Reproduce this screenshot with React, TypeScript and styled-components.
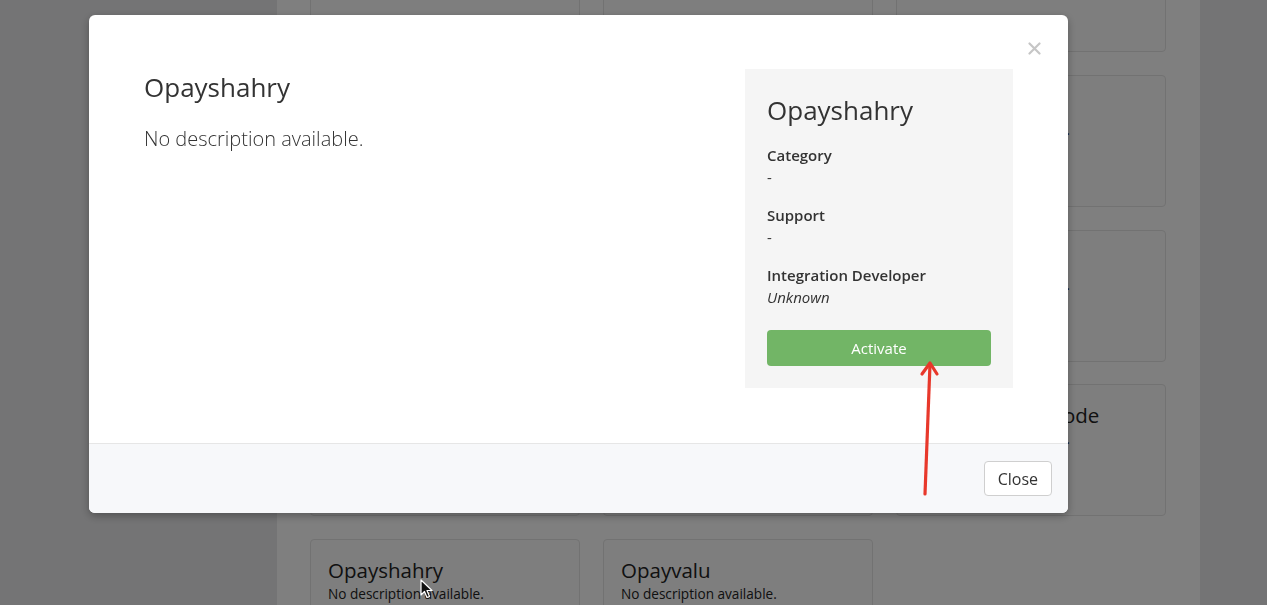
import styled, { createGlobalStyle } from "styled-components";

const GlobalStyle = createGlobalStyle`
  html, body {
    margin: 0;
    padding: 0;
    overflow: hidden;
    font-family: "Open Sans", "Liberation Sans", sans-serif;
  }
  * { box-sizing: border-box; }
`;

interface CardData {
  title: string;
  description: string;
}

const cards: CardData[] = [
  { title: "Opayapple", description: "No description available." },
  { title: "Opaybank", description: "No description available." },
  { title: "Opaycard", description: "No description available." },
  { title: "Opaycash", description: "No description available." },
  { title: "Opaycredit", description: "No description available." },
  { title: "Opaydebit", description: "No description available." },
  { title: "Opayeasy", description: "No description available." },
  { title: "Opayfast", description: "No description available." },
  { title: "Opaygift", description: "No description available." },
  { title: "Opayhome", description: "No description available." },
  { title: "Opaylink", description: "No description available." },
  { title: "Opay Coupon Code", description: "No description available." },
  { title: "Opayshahry", description: "No description available." },
  { title: "Opayvalu", description: "No description available." },
];

const Page = styled.div`
  display: flex;
  height: 605px;
  background: #e9e9eb;
`;

const Sidebar = styled.div`
  width: 277px;
  flex-shrink: 0;
`;

const Content = styled.div`
  width: 923px;
  flex-shrink: 0;
  background: #fff;
  padding: 0 34px 0 33px;
  overflow: hidden;
`;

const CardGrid = styled.div`
  display: grid;
  grid-template-columns: repeat(3, 270px);
  grid-auto-rows: 132px;
  column-gap: 23px;
  row-gap: 22.75px;
  margin-top: -80px;
`;

const Card = styled.div`
  border: 1px solid #e4e4e4;
  border-radius: 4px;
  background: #fcfcfc;
  padding: 17px 17px;
`;

const CardTitle = styled.div`
  font-size: 20.5px;
  line-height: 27px;
  color: #222;
  white-space: nowrap;
`;

const CardText = styled.div`
  font-size: 13.6px;
  line-height: 19px;
  color: #222;
  white-space: nowrap;
`;

const Backdrop = styled.div`
  position: fixed;
  inset: 0;
  background: rgba(0, 0, 0, 0.5);
  padding: 15px 0 0 89px;
`;

const Modal = styled.div`
  position: relative;
  width: 979px;
  background: #fff;
  border-radius: 6px;
  overflow: hidden;
  box-shadow: 0 3px 9px rgba(0, 0, 0, 0.3);
`;

const CloseX = styled.button`
  position: absolute;
  top: 27px;
  right: 27px;
  width: 13px;
  height: 13px;
  padding: 0;
  border: 0;
  background: none;
  display: flex;
`;

const Body = styled.div`
  display: grid;
  grid-template-columns: 1fr 268px;
  gap: 40px;
  padding: 54px 55px 55px;
`;

const Main = styled.div`
  color: #333;
`;

const Title = styled.h2`
  margin: 0;
  font-size: 26px;
  line-height: 36px;
  font-weight: 400;
  color: #333;
`;

const Description = styled.p`
  margin: 20px 0 0;
  font-size: 20px;
  line-height: 28px;
  font-weight: 300;
  color: #333;
`;

const Panel = styled.div`
  background: #f5f5f5;
  padding: 23px 22px 22px;
  color: #333;
`;

const PanelTitle = styled.h3`
  margin: 0 0 17px;
  font-size: 26px;
  line-height: 36px;
  font-weight: 400;
`;

const Field = styled.div`
  margin-bottom: 17px;
  font-size: 15px;
  line-height: 21.5px;
`;

const Label = styled.div`
  font-weight: 600;
`;

const Value = styled.div<{ $italic?: boolean }>`
  font-style: ${(p) => (p.$italic ? "italic" : "normal")};
`;

const ActivateButton = styled.button`
  display: block;
  width: 100%;
  height: 36px;
  margin-top: 22px;
  border: 0;
  border-radius: 4px;
  background: #72b566;
  color: #fff;
  font-family: inherit;
  font-size: 15px;
`;

const Footer = styled.div`
  display: flex;
  justify-content: flex-end;
  border-top: 1px solid #e6e6e6;
  background: #f7f8fa;
  padding: 17px 16px 17px;
`;

const CloseButton = styled.button`
  height: 35px;
  padding: 0 13px;
  border: 1px solid #cfcfcf;
  border-radius: 4px;
  background: #fff;
  color: #333;
  font-family: inherit;
  font-size: 16px;
`;

const Arrow = styled.svg`
  position: fixed;
  left: 910px;
  top: 355px;
  overflow: visible;
`;

const Cursor = styled.svg`
  position: fixed;
  left: 420px;
  top: 579px;
`;

export default function App() {
  return (
    <>
      <GlobalStyle />
      <Page>
        <Sidebar />
        <Content>
          <CardGrid>
            {cards.map((c, i) => (
              <Card key={i}>
                <CardTitle>{c.title}</CardTitle>
                <CardText>{c.description}</CardText>
              </Card>
            ))}
          </CardGrid>
        </Content>
      </Page>
      <Backdrop>
        <Modal>
          <CloseX aria-label="close">
            <svg width="13" height="13" viewBox="0 0 13 13">
              <path d="M1.5 1.5 L11.5 11.5 M11.5 1.5 L1.5 11.5" stroke="#c6c6c6" strokeWidth="2.2" strokeLinecap="round" />
            </svg>
          </CloseX>
          <Body>
            <Main>
              <Title>Opayshahry</Title>
              <Description>No description available.</Description>
            </Main>
            <Panel>
              <PanelTitle>Opayshahry</PanelTitle>
              <Field>
                <Label>Category</Label>
                <Value>-</Value>
              </Field>
              <Field>
                <Label>Support</Label>
                <Value>-</Value>
              </Field>
              <Field>
                <Label>Integration Developer</Label>
                <Value $italic>Unknown</Value>
              </Field>
              <ActivateButton>Activate</ActivateButton>
            </Panel>
          </Body>
          <Footer>
            <CloseButton>Close</CloseButton>
          </Footer>
        </Modal>
      </Backdrop>
      <Arrow width="40" height="145" viewBox="0 0 40 145">
        <g fill="none" stroke="#e8382b" strokeWidth="3.2" strokeLinecap="round" strokeLinejoin="round">
          <path d="M15 139 L20 9" />
          <path d="M12 19 L20 8 L27 19" />
        </g>
      </Arrow>
      <Cursor width="14" height="20" viewBox="0 0 14 20">
        <path d="M1 1 L1 16 L4.5 12.5 L7 18.5 L9.5 17.5 L7 11.5 L12 11.5 Z" fill="#111" stroke="#fff" strokeWidth="1.2" strokeLinejoin="round" />
      </Cursor>
    </>
  );
}
